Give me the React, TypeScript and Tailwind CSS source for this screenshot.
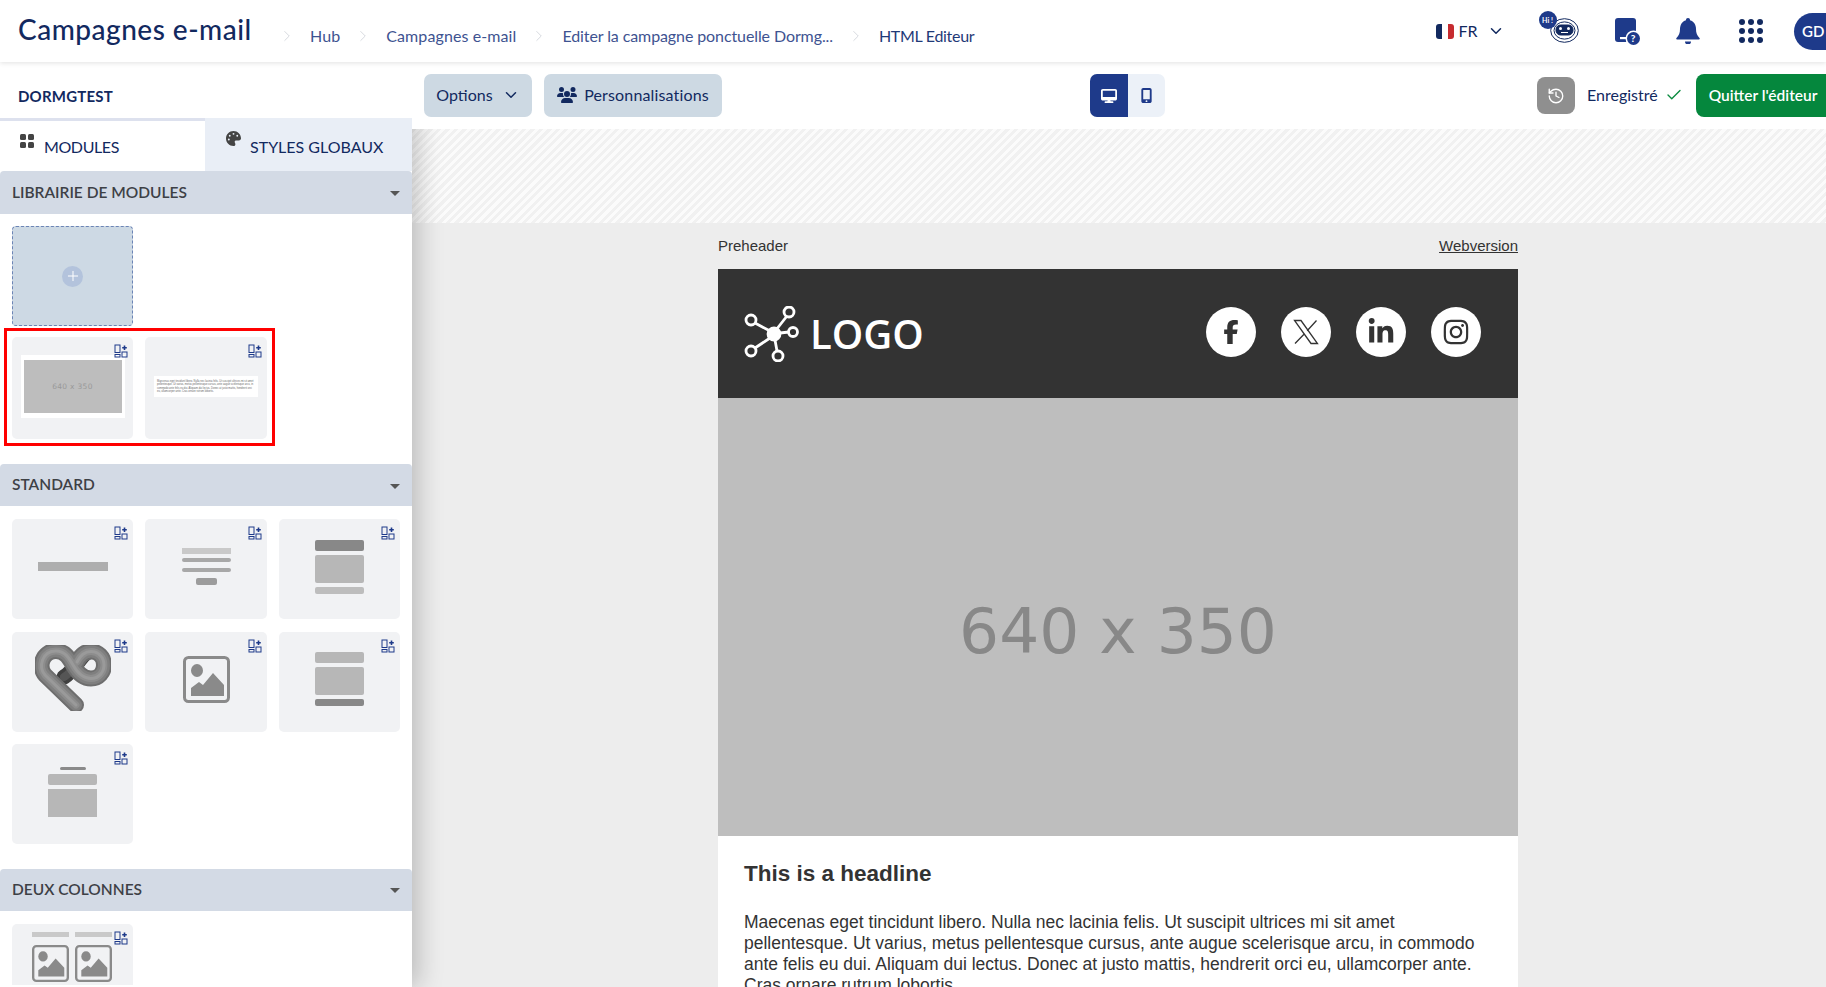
import React from "react";
import { FaFacebookF, FaLinkedinIn, FaInstagram, FaPalette, FaUsers, FaDesktop, FaMobileScreenButton } from "react-icons/fa6";
import { ChevronDown, ChevronRight, History, Check, Plus } from "lucide-react";

function AddIcon() {
  return (
    <svg className="absolute right-[5px] top-[7px]" width="14" height="14" viewBox="0 0 14 14" fill="none" stroke="#1e3a8a" strokeWidth="1">
      <rect x="1" y="1" width="5" height="7.5" />
      <rect x="1" y="10.5" width="5" height="2.5" />
      <rect x="8" y="8" width="5" height="5" />
      <path d="M10.5 1.5v4.5M8.2 3.7h4.6" strokeWidth="1.6" />
    </svg>
  );
}

function Card({ children }: { children?: React.ReactNode }) {
  return <div className="relative flex h-[100px] items-center justify-center rounded-[5px] bg-[#f1f2f4] pb-[5px]"><AddIcon />{children}</div>;
}

function TallCard({ children }: { children?: React.ReactNode }) {
  return <div className="relative flex h-[102px] items-center justify-center rounded-[5px] bg-[#f1f2f4] pb-[3px]"><AddIcon />{children}</div>;
}

function Section({ title, tall }: { title: string; tall?: boolean }) {
  return (
    <div className={`flex items-center justify-between rounded-t-[4px] bg-[#d3dae5] pl-3 pr-[12px] text-[15.5px] font-semibold text-[#3d4045] ${tall ? "h-[43px]" : "h-[42px]"}`}>
      <span>{title}</span>
      <span className="mt-[2px] h-0 w-0 border-x-[5px] border-t-[5px] border-x-transparent border-t-[#555]" />
    </div>
  );
}

function Knot() {
  const front = "M43 61 L12 31 C5 23 9 7 23 7 C32 7 36 14 40 21 C44 28 50 34.5 58 34.5 C66 34.5 71 28 71 21 C71 13 65 7.5 58 7.5 C51 7.5 47 12 44 18";
  const back = "M58 7.5 C48 8 44 25 31 33";
  return (
    <svg width="80" height="70" viewBox="0 0 80 70" fill="none" strokeLinecap="round">
      <defs>
        <filter id="kb" x="-10%" y="-10%" width="120%" height="120%"><feGaussianBlur stdDeviation="0.7" /></filter>
      </defs>
      <g filter="url(#kb)">
        <path d={back} stroke="#3f3f3f" strokeWidth="15" />
        <path d={back} stroke="#555" strokeWidth="8" />
        <path d={front} stroke="#6e6e6e" strokeWidth="16" />
        <path d={front} stroke="#7f7f7f" strokeWidth="12" />
        <path d={front} stroke="#8d8d8d" strokeWidth="7" />
        <path d={front} stroke="#9a9a9a" strokeWidth="3" />
      </g>
    </svg>
  );
}

function ImageGlyph({ size = 47 }: { size?: number }) {
  return (
    <svg width={size} height={size} viewBox="0 0 47 47">
      <rect x="1.5" y="1.5" width="44" height="44" rx="4" fill="none" stroke="#8a8a8a" strokeWidth="3" />
      <ellipse cx="14" cy="14.5" rx="6" ry="6.5" fill="#8a8a8a" />
      <path d="M8 40V32L16 26 20 29 30 17 41 29V40Z" fill="#8a8a8a" />
    </svg>
  );
}

function Blocks({ rows }: { rows: [number, string][] }) {
  return (
    <div className="flex w-[49px] flex-col gap-[4px]">
      {rows.map(([h, c], i) => <div key={i} className="rounded-[2px]" style={{ height: h, background: c }} />)}
    </div>
  );
}

function Flag() {
  return (
    <div className="flex h-[15px] w-[18px] overflow-hidden rounded-[3px]">
      <div className="flex-1 bg-[#12295f]" />
      <div className="flex-1 bg-white" />
      <div className="flex-1 bg-[#c62b30]" />
    </div>
  );
}

function Bot() {
  return (
    <div className="relative h-[32px] w-[40px]">
      <svg className="absolute right-0 bottom-0" width="29" height="25" viewBox="0 0 29 25" fill="none" stroke="#12295f">
        <ellipse cx="14.5" cy="12.5" rx="13.8" ry="11.8" strokeWidth="1" />
        <ellipse cx="14.5" cy="12.5" rx="10.5" ry="8.6" strokeWidth="1" />
        <rect x="6" y="7" width="17" height="10" rx="4.5" fill="#12295f" />
        <circle cx="10.5" cy="10.5" r="1.5" fill="#fff" stroke="none" />
        <circle cx="18.5" cy="10.5" r="1.5" fill="#fff" stroke="none" />
        <path d="M11 14.5h7" stroke="#fff" />
      </svg>
      <div className="absolute left-0 top-0 flex h-[18px] w-[18px] items-center justify-center rounded-full bg-[#1e3a8a] text-[7px] font-bold text-white">Hi !</div>
    </div>
  );
}

function Help() {
  return (
    <div className="relative h-[27px] w-[25px]">
      <svg width="25" height="27" viewBox="0 0 25 27">
        <rect x="0" y="0" width="21" height="24" rx="3" fill="#1e3a8a" />
        <circle cx="18.5" cy="20.5" r="8" fill="#fff" />
        <rect x="5" y="19" width="6" height="2.2" fill="#fff" />
      </svg>
      <div className="absolute bottom-0 right-0 flex h-[13px] w-[13px] items-center justify-center rounded-full bg-[#1e3a8a] text-[10px] font-black leading-none text-white">?</div>
    </div>
  );
}

function Bell() {
  return (
    <svg width="24" height="26" viewBox="0 0 24 26" fill="#1e3a8a">
      <path d="M12 0a2 2 0 0 1 2 2.2C18 3.2 20 7 20 11c0 4 1 6.5 3.5 9 .5.6 .3 1.5-.6 1.5H1.1C.2 21.5 0 20.6 .5 20 3 17.5 4 15 4 11c0-4 2-7.8 6-8.8A2 2 0 0 1 12 0Z" />
      <path d="M9 23.5h6a3 3 0 0 1-6 0Z" />
    </svg>
  );
}

function Grid() {
  return (
    <div className="grid grid-cols-3 gap-[2.5px]">
      {Array.from({ length: 9 }).map((_, i) => <div key={i} className="h-[6.5px] w-[6.5px] rounded-full bg-[#12295f]" />)}
    </div>
  );
}

function Logo() {
  return (
    <div className="flex items-center">
      <svg width="56" height="56" viewBox="0 0 56 56" fill="none" stroke="#fff" strokeWidth="2.8">
        <circle cx="30" cy="28" r="6" fill="#fff" />
        <circle cx="7" cy="14" r="5" />
        <circle cx="45" cy="6" r="5" />
        <circle cx="49" cy="26" r="4.5" />
        <circle cx="7" cy="45" r="5" />
        <circle cx="34" cy="50" r="5" />
        <path d="M11 17l15 8M32 24l11-14M36 27l9-1M26 32L11 42M31 34l2 11" />
      </svg>
      <span className="ml-[10px] text-[40px] font-semibold leading-none text-white [font-family:'Open_Sans',sans-serif]">LOGO</span>
    </div>
  );
}

function XOutline() {
  return (
    <svg width="28" height="28" viewBox="0 0 28 28" fill="none" stroke="#333" strokeWidth="1.3">
      <path d="M2.5 2.5h6.5l16.5 23h-6.5Z" />
      <path d="M24.5 2.5l-9.3 10.3M12 16.2L3 25.5" />
    </svg>
  );
}

function Social({ children }: { children: React.ReactNode }) {
  return <div className="flex h-[50px] w-[50px] items-center justify-center rounded-full bg-white text-[#333]">{children}</div>;
}

function Crumb({ children, className }: { children: React.ReactNode; className?: string }) {
  return <span className={className ?? "text-[#3e5391]"}>{children}</span>;
}

function Sep() {
  return <ChevronRight size={18} className="mx-[14px] text-[#c8ccd4]" strokeWidth={1} />;
}

export default function App() {
  return (
    <div className="flex h-[987px] w-[1826px] flex-col overflow-hidden bg-white text-[#12295f] [font-family:Lato,sans-serif]">
      <header className="relative z-30 flex h-[62px] shrink-0 items-center justify-between bg-white pl-[18px] shadow-[0_1px_5px_rgba(0,0,0,0.12)]">
        <div className="flex items-center">
          <h1 className="mb-[4px] w-[260px] text-[28px] font-medium leading-none tracking-[0.5px] text-[#12295f]">Campagnes e-mail</h1>
          <nav className="mt-[10px] flex items-center text-[16px] tracking-[0.1px]">
            <ChevronRight size={18} className="mr-[14px] text-[#c8ccd4]" strokeWidth={1} />
            <Crumb>Hub</Crumb>
            <Sep />
            <Crumb>Campagnes e-mail</Crumb>
            <Sep />
            <Crumb className="tracking-[-0.1px] text-[#3e5391]">Editer la campagne ponctuelle Dormg...</Crumb>
            <Sep />
            <Crumb className="tracking-[-0.3px] text-[#1f3a78]">HTML Editeur</Crumb>
          </nav>
        </div>
        <div className="flex items-center">
          <Flag />
          <span className="ml-[4px] text-[16px]">FR</span>
          <ChevronDown size={18} className="ml-[9px]" strokeWidth={2} />
          <div className="mb-[8px] ml-[34px]"><Bot /></div>
          <div className="ml-[36px]"><Help /></div>
          <div className="ml-[36px]"><Bell /></div>
          <div className="ml-[39px]"><Grid /></div>
          <div className="ml-[31px] flex h-[37px] w-[32px] items-center overflow-hidden rounded-l-full bg-[#1e3a8a] pl-[8px] text-[15px] font-semibold text-white">GD</div>
        </div>
      </header>

      <div className="flex min-h-0 flex-1">
        <aside className="relative z-10 flex w-[412px] shrink-0 flex-col bg-white shadow-[6px_0_24px_rgba(0,0,0,0.22)]">
          <div className="flex h-[56px] shrink-0 items-center pl-[18px] pt-[13px] text-[15px] font-bold tracking-[0.2px]">DORMGTEST</div>
          <div className="flex h-[53px] shrink-0 text-[16px]">
            <div className="flex w-[205px] items-start border-t-[3px] border-[#dde1ee] pl-[20px] pt-[16px]">
              <svg width="14" height="14" viewBox="0 0 14 14" fill="#444" className="mt-[-3px]">
                <rect x="0" y="0" width="6" height="6" rx="1.5" /><rect x="8" y="0" width="6" height="6" rx="1.5" />
                <rect x="0" y="8" width="6" height="6" rx="1.5" /><rect x="8" y="8" width="6" height="6" rx="1.5" />
              </svg>
              <span className="ml-[10px] leading-5 tracking-[-0.4px]">MODULES</span>
            </div>
            <div className="flex flex-1 items-start bg-[#e9eef6] pl-[21px] pt-[19px]">
              <FaPalette size={15} className="mt-[-6px] text-[#444]" />
              <span className="ml-[9px] leading-5">STYLES GLOBAUX</span>
            </div>
          </div>
          <Section title="LIBRAIRIE DE MODULES" tall />
          <div className="mt-[12px] pl-[12px]">
            <div className="flex h-[100px] w-[121px] items-center justify-center rounded-[4px] border border-dashed border-[#6b84b5] bg-[#cdd9e4]">
              <div className="flex h-[21px] w-[21px] items-center justify-center rounded-full bg-[#b3c3dc] text-white"><Plus size={16} strokeWidth={1.5} /></div>
            </div>
          </div>
          <div className="ml-[4px] mt-[2px] grid h-[118px] w-[271px] grid-cols-[121px_122px] content-start gap-x-[12px] border-[3px] border-[#ff0000] pl-[5px] pt-[6px]">
            <TallCard>
              <div className="bg-white px-[3px] py-[5px]">
                <div className="flex h-[53px] w-[98px] items-center justify-center bg-[#bdbdbd] text-[7.5px] tracking-[0.3px] text-[#999] [font-family:'DejaVu_Sans',sans-serif]">640 x 350</div>
              </div>
            </TallCard>
            <TallCard>
              <div className="flex h-[21px] w-[104px] items-center bg-white px-[3px] text-[2.6px] leading-[3.2px] text-[#666] [font-family:'Liberation_Sans',sans-serif]">
                <span>Maecenas eget tincidunt libero. Nulla nec lacinia felis. Ut suscipit ultrices mi sit amet pellentesque. Ut varius, metus pellentesque cursus, ante augue scelerisque arcu, in commodo ante felis eu dui. Aliquam dui lectus. Donec at justo mattis, hendrerit orci eu, ullamcorper ante. Cras ornare rutrum lobortis.</span>
              </div>
            </TallCard>
          </div>
          <div className="mt-[18px]"><Section title="STANDARD" /></div>
          <div className="mt-[13px] grid grid-cols-[121px_122px_121px] gap-x-[12px] gap-y-[12.5px] pl-[12px]">
            <Card><div className="h-[9px] w-[70px] bg-[#aeaeae]" /></Card>
            <Card>
              <div className="flex flex-col items-center">
                <div className="h-[6px] w-[49px] bg-[#c9c9c9]" />
                <div className="mt-[4px] h-[4px] w-[49px] rounded-full bg-[#a8a8a8]" />
                <div className="mt-[6px] h-[4px] w-[49px] rounded-full bg-[#a8a8a8]" />
                <div className="mt-[6px] h-[7px] w-[21px] rounded-[2px] bg-[#9c9c9c]" />
              </div>
            </Card>
            <Card><Blocks rows={[[11, "#888"], [28, "#b7b7b7"], [7, "#bdbdbd"]]} /></Card>
            <Card><Knot /></Card>
            <Card><ImageGlyph /></Card>
            <Card><Blocks rows={[[11, "#b7b7b7"], [28, "#b7b7b7"], [7, "#888"]]} /></Card>
            <Card>
              <div className="flex w-[49px] flex-col items-center gap-[4px]">
                <div className="h-[3px] w-[26px] rounded-full bg-[#8a8a8a]" />
                <div className="h-[11px] w-[49px] rounded-[2px] bg-[#b7b7b7]" />
                <div className="h-[28px] w-[49px] bg-[#b7b7b7]" />
              </div>
            </Card>
          </div>
          <div className="mt-[24.5px]"><Section title="DEUX COLONNES" /></div>
          <div className="mt-[13px] pl-[12px]">
            <div className="relative h-[61px] w-[121px] overflow-hidden rounded-t-[5px] bg-[#f1f2f4]">
              <AddIcon />
              <div className="absolute left-[20px] top-[8px] flex gap-[6px]">
                <div className="h-[5px] w-[37px] bg-[#c9c9c9]" />
                <div className="h-[5px] w-[37px] bg-[#c9c9c9]" />
              </div>
              <div className="absolute left-[20px] top-[21px] flex gap-[6px]">
                <ImageGlyph size={37} />
                <ImageGlyph size={37} />
              </div>
            </div>
          </div>
        </aside>

        <main className="flex min-w-0 flex-1 flex-col">
          <div className="relative z-20 flex h-[67px] shrink-0 items-start bg-white pt-[12px] text-[16px]">
            <div className="ml-[12px] flex h-[43px] w-[108px] items-center justify-center gap-[9px] rounded-[7px] bg-[#cdd9e3] pb-[1px]">
              Options <ChevronDown size={18} strokeWidth={2} />
            </div>
            <div className="ml-[12px] flex h-[43px] w-[178px] items-center justify-center gap-[7px] rounded-[7px] bg-[#cdd9e3] pb-[1px] tracking-[0.15px]">
              <FaUsers size={20} /> Personnalisations
            </div>
            <div className="ml-[368px] flex h-[43px] w-[75px] overflow-hidden rounded-[7px] bg-[#ecf1f8]">
              <div className="flex w-[38px] items-center justify-center bg-[#1e3a8a] text-white"><FaDesktop size={16} /></div>
              <div className="flex flex-1 items-center justify-center text-[#1e3a8a]"><FaMobileScreenButton size={15} /></div>
            </div>
            <div className="ml-[372px] mt-[3px] flex h-[37px] w-[38px] items-center justify-center rounded-[8px] bg-[#8f8f8f] text-white"><History size={18} strokeWidth={1.8} /></div>
            <span className="ml-[12px] mt-[11px] text-[16px] leading-5">Enregistré</span>
            <Check size={18} className="ml-[7px] mt-[12px] text-[#0a8a3f]" strokeWidth={1.8} />
            <div className="ml-[13px] flex h-[43px] flex-1 items-center rounded-l-[8px] bg-[#05873d] pl-[13px] text-[15.5px] font-semibold text-white">Quitter l'éditeur</div>
          </div>
          <div className="h-[94px] shrink-0 bg-[repeating-linear-gradient(135deg,#f1f1f1_0,#f1f1f1_3px,#fbfbfb_3px,#fbfbfb_6px)]" />
          <div className="flex min-h-0 flex-1 justify-center overflow-hidden bg-[#ededed] pr-[2px] text-[#333] [font-family:'Liberation_Sans',sans-serif]">
            <div className="w-[800px]">
              <div className="flex h-[46px] items-center justify-between text-[15px]">
                <span>Preheader</span>
                <span className="underline">Webversion</span>
              </div>
              <div className="flex h-[129px] items-center justify-between bg-[#333] pl-[26px] pr-[37px]">
                <Logo />
                <div className="mb-[4px] flex gap-[25px]">
                  <Social><FaFacebookF size={24} /></Social>
                  <Social><XOutline /></Social>
                  <Social><FaLinkedinIn size={28} /></Social>
                  <Social><FaInstagram size={28} /></Social>
                </div>
              </div>
              <div className="flex h-[438px] items-center justify-center bg-[#bebebe] pt-[30px] text-[63px] text-[#888] [font-family:'DejaVu_Sans',sans-serif]">640 x 350</div>
              <div className="h-[200px] bg-white pl-[26px] pr-[24px] pt-[24px]">
                <h2 className="text-[22.5px] font-bold leading-[28px]">This is a headline</h2>
                <p className="mt-[24px] text-[17.5px] leading-[21px]">
                  Maecenas eget tincidunt libero. Nulla nec lacinia felis. Ut suscipit ultrices mi sit amet pellentesque. Ut varius, metus pellentesque cursus, ante augue scelerisque arcu, in commodo ante felis eu dui. Aliquam dui lectus. Donec at justo mattis, hendrerit orci eu, ullamcorper ante. Cras ornare rutrum lobortis.
                </p>
              </div>
            </div>
          </div>
        </main>
      </div>
    </div>
  );
}
